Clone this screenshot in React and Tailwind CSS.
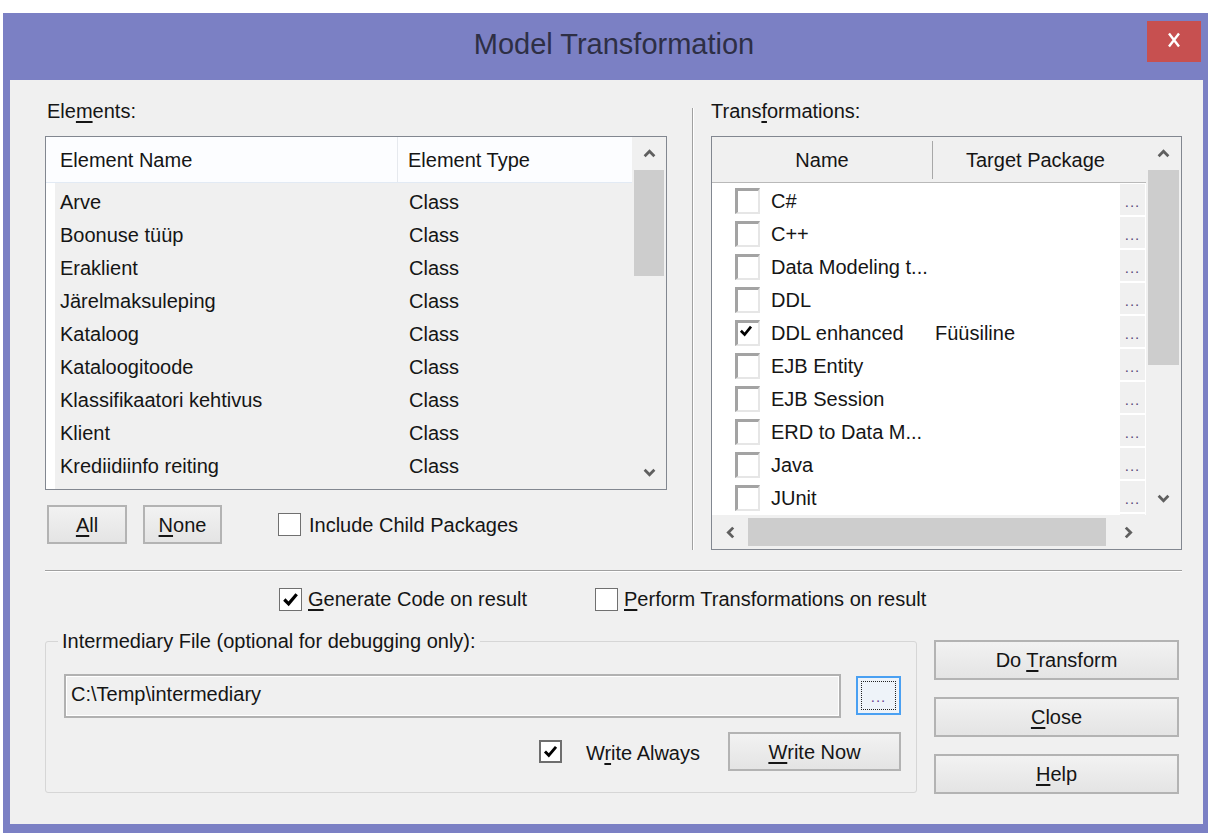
import React from 'react'

const ELEMENTS = [
  'Arve',
  'Boonuse tüüp',
  'Eraklient',
  'Järelmaksuleping',
  'Kataloog',
  'Kataloogitoode',
  'Klassifikaatori kehtivus',
  'Klient',
  'Krediidiinfo reiting',
]

// last row only peeks out above the horizontal scrollbar
const TRANSFORMS = [
  { name: 'C#' },
  { name: 'C++' },
  { name: 'Data Modeling t...' },
  { name: 'DDL' },
  { name: 'DDL enhanced', target: 'Füüsiline', checked: true },
  { name: 'EJB Entity' },
  { name: 'EJB Session' },
  { name: 'ERD to Data M...' },
  { name: 'Java' },
  { name: 'JUnit' },
  { name: '', peek: true },
]

const ARROWS = {
  up: 'M1.5 8.5 L6 4 L10.5 8.5',
  down: 'M1.5 3.5 L6 8 L10.5 3.5',
  left: 'M8.5 1.5 L4 6 L8.5 10.5',
  right: 'M3.5 1.5 L8 6 L3.5 10.5',
}

function Arrow({ dir }) {
  return (
    <svg width="13" height="13" viewBox="0 0 12 12">
      <path d={ARROWS[dir]} fill="none" stroke="#5f5f5f" strokeWidth="2.6" />
    </svg>
  )
}

function Tick({ size = 19 }) {
  return (
    <svg width={size} height={size} viewBox="0 0 20 20">
      <path d="M3.5 10 L8 14.5 L16.5 4.5" fill="none" stroke="#000" strokeWidth="3.4" />
    </svg>
  )
}

// flat Windows 8 style checkbox
function Check({ checked, dark }) {
  return (
    <div
      className={`w-[23px] h-[23px] bg-white flex items-center justify-center shrink-0 ${
        dark ? 'border-2 border-[#6e6e6e]' : 'border border-[#707070]'
      }`}
    >
      {checked && <Tick size={dark ? 17 : 19} />}
    </div>
  )
}

// sunken checkbox used inside the transformations grid
function GridCheck({ checked }) {
  return (
    <div className="w-[25px] h-[26px] shrink-0 bg-white border-t-[3px] border-l-[3px] border-t-[#a3a3a3] border-l-[#a3a3a3] border-b-2 border-r-2 border-b-[#e6e6e6] border-r-[#e6e6e6] flex items-start justify-start">
      {checked && (
        <svg width="15" height="15" viewBox="0 0 20 20" className="ml-[1px] mt-[1px]">
          <path d="M2.5 9 L7.5 14 L16 3.5" fill="none" stroke="#000" strokeWidth="3.6" />
        </svg>
      )}
    </div>
  )
}

function Button({ children, className = '' }) {
  return (
    <div
      className={`border-2 border-[#b3b3b3] bg-linear-to-b from-[#f2f2f2] to-[#e4e4e4] flex items-center justify-center ${className}`}
    >
      {children}
    </div>
  )
}

function ElementsPanel() {
  return (
    <div className="w-[622px] shrink-0">
      <div className="h-[24px] pl-[2px]">
        Ele<u className="underline-offset-[3px]">m</u>ents:
      </div>
      <div className="mt-[13px] h-[354px] border border-[#828790] flex">
        <div className="flex-1 flex flex-col">
          <div className="h-[46px] flex bg-[#fcfdff] border-b border-[#e2eaf4]">
            <div className="w-[352px] pl-[14px] flex items-center border-r border-[#e6e9ee]">Element Name</div>
            <div className="pl-[10px] flex items-center">Element Type</div>
          </div>
          <div className="flex-1 flex bg-[#f0f0f0] overflow-hidden">
            <div className="w-[9px] bg-white" />
            <div className="flex-1 pt-[2px]">
              {ELEMENTS.map((name) => (
                <div key={name} className="h-[33px] flex items-center">
                  <span className="w-[343px] pl-[5px]">{name}</span>
                  <span className="pl-[11px]">Class</span>
                </div>
              ))}
            </div>
          </div>
        </div>
        <div className="w-[34px] flex flex-col bg-[#f0f0f0]">
          <div className="h-[33px] flex items-center justify-center">
            <Arrow dir="up" />
          </div>
          <div className="h-[106px] mx-[2px] bg-[#cdcdcd]" />
          <div className="flex-1" />
          <div className="h-[33px] flex items-center justify-center">
            <Arrow dir="down" />
          </div>
        </div>
      </div>
      <div className="mt-[15px] flex items-center">
        <Button className="ml-[2px] w-[80px] h-[39px]">
          <u className="underline-offset-[3px]">A</u>ll
        </Button>
        <Button className="ml-[16px] w-[79px] h-[39px]">
          <u className="underline-offset-[3px]">N</u>one
        </Button>
        <div className="ml-[56px] flex items-center">
          <Check />
          <span className="ml-[8px]">Include Child Packages</span>
        </div>
      </div>
    </div>
  )
}

function TransformationsPanel() {
  return (
    <div className="w-[471px] shrink-0">
      <div className="h-[24px]">
        Trans<u className="underline-offset-[3px]">f</u>ormations:
      </div>
      <div className="mt-[13px] h-[414px] border border-[#828790] flex flex-col">
        <div className="flex flex-1 min-h-0">
          <div className="w-[434px] flex flex-col">
            <div className="h-[46px] flex items-center bg-[#f0f0f0] border-b border-[#b9b9b9]">
              <div className="w-[220px] text-center">Name</div>
              <div className="w-px h-[38px] bg-[#a8a8a8]" />
              <div className="flex-1 text-center pr-[8px]">Target Package</div>
            </div>
            <div className="flex-1 bg-white overflow-hidden pt-[1px]">
              {TRANSFORMS.map((t, i) => (
                <div key={i} className="h-[33px] flex items-center">
                  <div className="w-[23px]" />
                  <GridCheck checked={t.checked} />
                  <span className="ml-[11px] w-[161px] whitespace-nowrap">{t.name}</span>
                  <span className="pl-[3px] flex-1">{t.target}</span>
                  <div className="w-[25px] h-full mr-[1px] bg-[#f0f0f0] border-b-2 border-white flex items-end justify-center pb-[6px] text-[15px] leading-none tracking-[1px] text-[#5b4a7a]">
                    {t.peek ? '' : '...'}
                  </div>
                </div>
              ))}
            </div>
          </div>
          <div className="w-[35px] flex flex-col bg-[#f0f0f0]">
            <div className="h-[33px] flex items-center justify-center">
              <Arrow dir="up" />
            </div>
            <div className="h-[195px] mx-[2px] bg-[#cdcdcd]" />
            <div className="flex-1" />
            <div className="h-[33px] flex items-center justify-center">
              <Arrow dir="down" />
            </div>
          </div>
        </div>
        <div className="h-[34px] flex bg-[#f0f0f0]">
          <div className="w-[434px] flex">
            <div className="w-[36px] flex items-center justify-center">
              <Arrow dir="left" />
            </div>
            <div className="w-[358px] my-[3px] bg-[#cdcdcd]" />
            <div className="flex-1 flex items-center justify-center pl-[4px]">
              <Arrow dir="right" />
            </div>
          </div>
          <div className="flex-1" />
        </div>
      </div>
    </div>
  )
}

function IntermediaryGroup() {
  return (
    <fieldset className="w-[872px] shrink-0 border border-[#d6d6d6] rounded-[3px]">
      <legend className="ml-[12px] px-[4px] leading-[24px]">Intermediary File (optional for debugging only):</legend>
      <div className="pl-[18px] pr-[15px] pb-[21px]">
        <div className="mt-[21px] flex items-start">
          <div className="flex-1 h-[44px] border-2 border-[#b1b1b1] shadow-[inset_0_0_0_1px_#ffffff] bg-[#f0f0f0] flex items-center pl-[5px] pb-[4px]">
            C:\Temp\intermediary
          </div>
          <div className="ml-[15px] mt-[2px] w-[45px] h-[39px] border-2 border-[#4aa0f2] bg-[#eef3f9] p-[3px]">
            <div className="w-full h-full border border-dotted border-[#222] flex items-end justify-center pb-[5px] text-[15px] leading-none tracking-[1px] text-[#6b3f8f]">
              ...
            </div>
          </div>
        </div>
        <div className="mt-[14px] flex items-center justify-end">
          <Check checked dark />
          <span className="ml-[24px] pt-[3px]">
            W<u className="underline-offset-[3px]">r</u>ite Always
          </span>
          <Button className="ml-[28px] w-[173px] h-[39px]">
            <u className="underline-offset-[3px]">W</u>rite Now
          </Button>
        </div>
      </div>
    </fieldset>
  )
}

export default function App() {
  return (
    <div className="w-[1208px] h-[833px] overflow-hidden bg-white pt-[13px] pl-[3px] font-['Liberation_Sans',Arial,sans-serif]">
      <div className="w-[1207px] h-[820px] bg-[#7b80c4] flex flex-col">
        {/* caption */}
        <div className="relative h-[67px] shrink-0 flex items-center justify-center pl-[15px] pb-[5px]">
          <span className="text-[29px] leading-none text-[#2e2f45]">Model Transformation</span>
          <div className="absolute right-[9px] top-[8px] w-[54px] h-[41px] bg-[#c75050] flex items-center justify-center pb-[3px]">
            <svg width="14" height="16" viewBox="0 0 14 16">
              <path d="M2 1.5 L12 14.5 M12 1.5 L2 14.5" stroke="#fff" strokeWidth="2.4" fill="none" />
            </svg>
          </div>
        </div>

        {/* client area */}
        <div className="ml-[7px] w-[1193px] h-[744px] bg-[#f0f0f0] text-[20px] leading-[24px] text-[#151515]">
          <div className="flex items-start pl-[35px] pt-[19px]">
            <ElementsPanel />
            <div className="ml-[25px] mt-[9px] h-[442px] w-[2px] border-l border-[#a0a0a0] border-r border-r-white shrink-0" />
            <div className="ml-[17px]">
              <TransformationsPanel />
            </div>
          </div>

          <div className="mt-[20px] ml-[35px] w-[1137px] h-[2px] border-t border-[#a0a0a0] border-b border-b-white" />

          <div className="mt-[15px] h-[24px] flex items-center pl-[269px]">
            <div className="w-[316px] flex items-center">
              <Check checked />
              <span className="ml-[6px]">
                <u className="underline-offset-[3px]">G</u>enerate Code on result
              </span>
            </div>
            <Check />
            <span className="ml-[6px]">
              <u className="underline-offset-[3px]">P</u>erform Transformations on result
            </span>
          </div>

          <div className="mt-[18px] flex items-start pl-[35px]">
            <IntermediaryGroup />
            <div className="ml-[17px] mt-[11px] w-[245px] flex flex-col gap-[17px]">
              <Button className="h-[40px]">
                Do <u className="underline-offset-[3px] ml-[5px]">T</u>ransform
              </Button>
              <Button className="h-[40px]">
                <u className="underline-offset-[3px]">C</u>lose
              </Button>
              <Button className="h-[40px]">
                <u className="underline-offset-[3px]">H</u>elp
              </Button>
            </div>
          </div>
        </div>
      </div>
    </div>
  )
}
